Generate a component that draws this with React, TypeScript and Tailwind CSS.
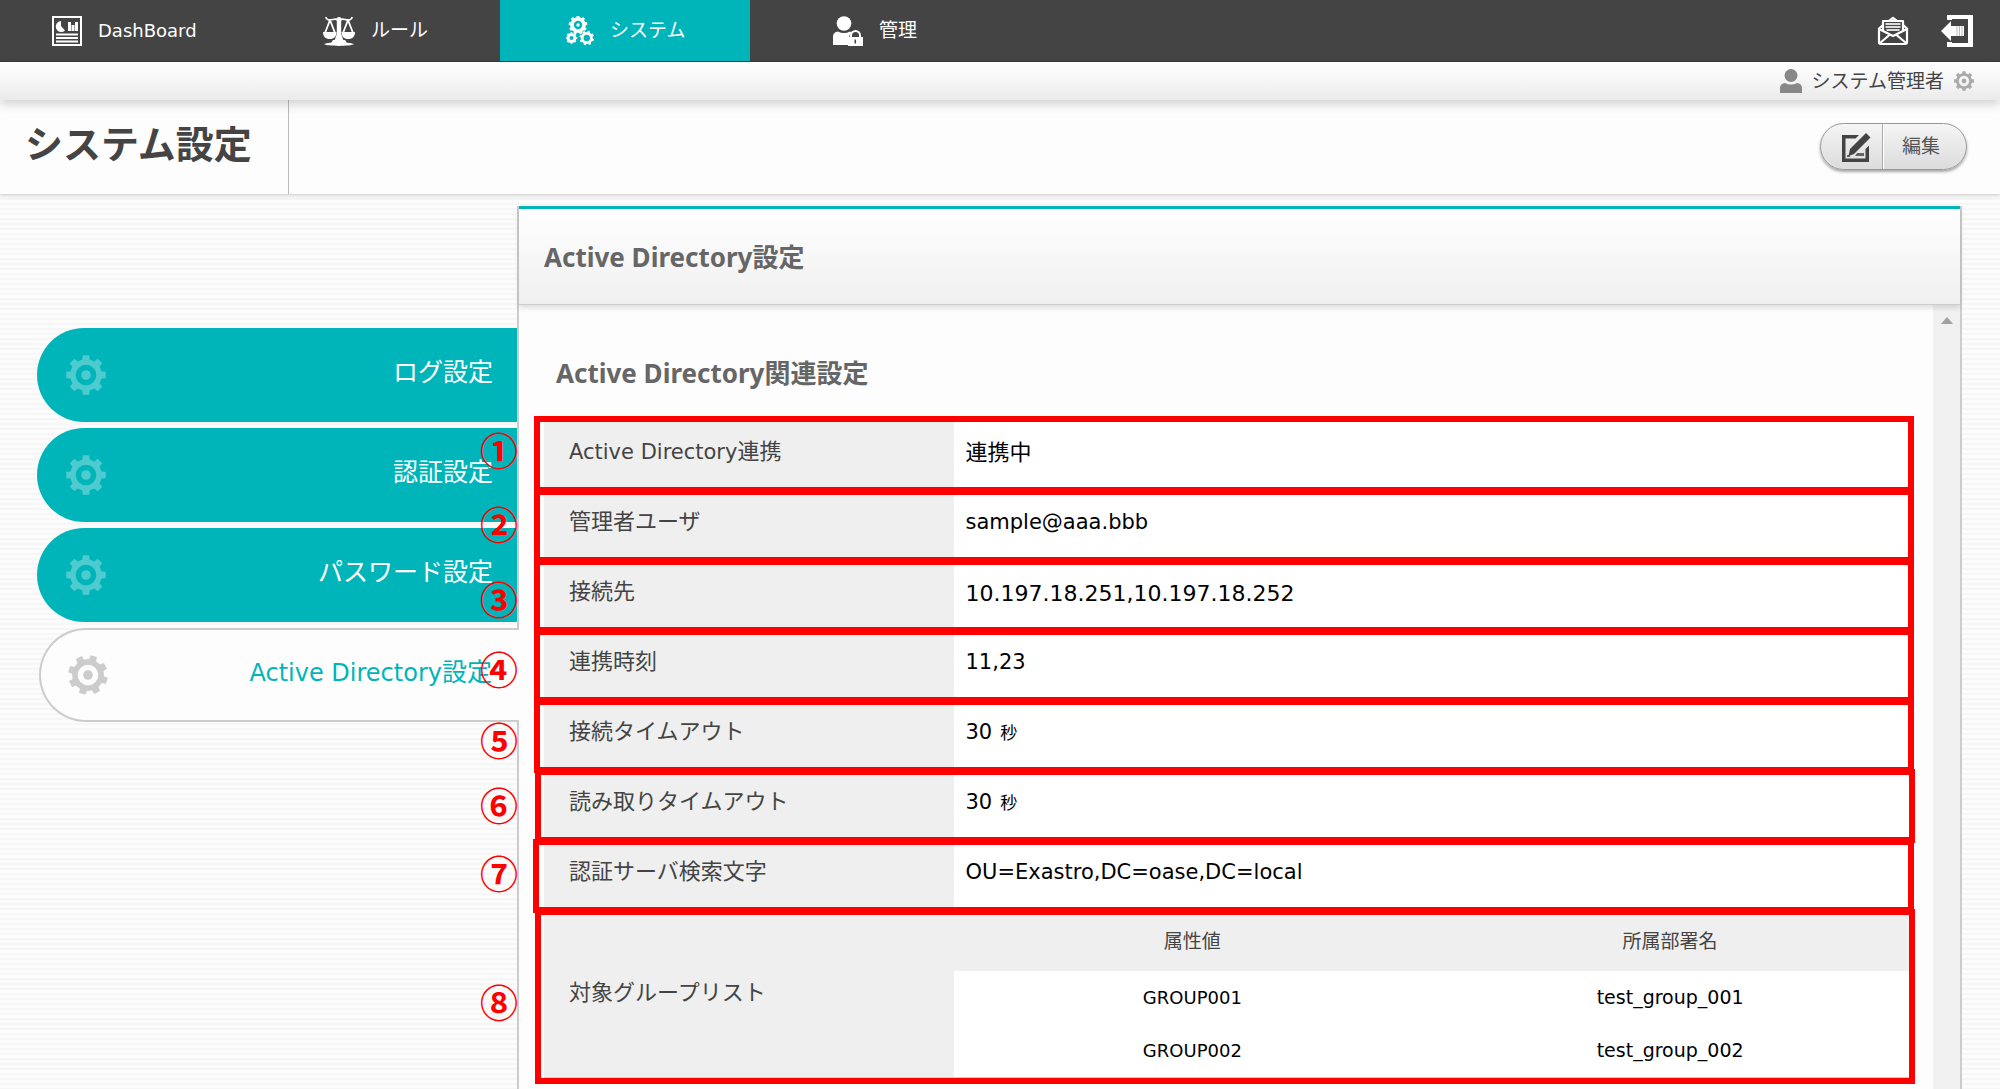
import React from 'react';

const gearPath = (cx: number, cy: number, ro: number, ri: number, teeth: number, rot = 0) => {
  const pts: string[] = [];
  const step = (Math.PI * 2) / teeth;
  for (let i = 0; i < teeth; i++) {
    const a = i * step + rot - Math.PI / 2;
    const add = (r: number, o: number) =>
      pts.push(`${(cx + r * Math.cos(a + o)).toFixed(2)} ${(cy + r * Math.sin(a + o)).toFixed(2)}`);
    add(ri, -step * 0.29);
    add(ro, -step * 0.21);
    add(ro, step * 0.21);
    add(ri, step * 0.29);
  }
  return `M${pts.join('L')}Z`;
};

const ring = (cx: number, cy: number, r: number) =>
  `M${cx - r} ${cy}a${r} ${r} 0 1 0 ${2 * r} 0a${r} ${r} 0 1 0 ${-2 * r} 0Z`;

function Gear({ className, rot = 0 }: { className: string; rot?: number }) {
  return (
    <svg viewBox="0 0 40 40" className={className} fill="currentColor" aria-hidden="true">
      <path fillRule="evenodd" d={gearPath(20, 20, 20, 16, 8, rot) + ring(20, 20, 10.3)} />
      <circle cx="20" cy="20" r="4.8" />
    </svg>
  );
}

function ReportIcon() {
  return (
    <svg viewBox="0 0 30 30" className="size-[30px]" aria-hidden="true">
      <path fill="#fff" fillRule="evenodd" d="M0 0h30v30H0ZM2 2v26h26V2Z" />
      <path fill="#fff" d="M9 5a5.500 5.500 0 1 0 4 9.500L9 10ZM16 6h3v9h-3ZM19.500 9h3v6h-3ZM23 6h3v9h-3ZM4 17.500h22v2H4ZM4 21h22v2H4ZM4 24.500h22v2H4Z" />
    </svg>
  );
}

function ScalesIcon() {
  return (
    <svg viewBox="0 0 32 30" className="h-[30px] w-8" fill="#fff" aria-hidden="true">
      <path d="M13.800 4h4.400v14l2.500 7h-9.400l2.500-7Z" />
      <circle cx="16" cy="3.500" r="2.500" />
      <path d="M3 1c0 3 3 3.500 7 2.500 3-.8 3 0 6 0s3-.8 6 0c4 1 7 .5 7-2.500M7 4 2 17M7 4l5 13M25 4l-5 13M25 4l5 13" fill="none" stroke="#fff" strokeWidth="1.800" />
      <path d="M0 16h13.500c0 4.500-2.500 7-6.700 7S0 20.500 0 16ZM18.500 16H32c0 4.500-2.500 7-6.700 7s-6.800-2.500-6.800-7Z" />
      <path d="M10 24h12l2 3H8ZM1 28c5-2.500 25-2.500 30 0-3 2.500-27 2.500-30 0Z" />
    </svg>
  );
}

function GearsIcon() {
  return (
    <svg viewBox="0 0 28 30" className="h-[30px] w-7" fill="#fff" fillRule="evenodd" aria-hidden="true">
      <path d={gearPath(12, 9, 9.4, 7.8, 9) + ring(12, 9, 4.2)} />
      <circle cx="12" cy="9" r="1.700" />
      <path d={gearPath(5.500, 22, 5.800, 4.900, 8) + ring(5.500, 22, 2)} />
      <path d={gearPath(20.800, 22, 7.400, 6, 8, 0.300) + ring(20.800, 22, 3.200)} />
    </svg>
  );
}

function AdminIcon() {
  return (
    <svg viewBox="0 0 30 30" className="size-[30px]" fill="#fff" aria-hidden="true">
      <circle cx="11" cy="7.500" r="7.300" />
      <path d="M0 29V21c0-3.500 2-5 5-5.500 4 2 8 2 12 0l2 1c-2 2-3 3-3 5.500l-1 1v6Z" />
      <path fillRule="evenodd" d="M15 21h15v9.500H15ZM21.500 23.500v4h1.500v-4Z" />
      <path d="M18 22v-2.500a4.500 4.500 0 0 1 9 0V22" fill="none" stroke="#fff" strokeWidth="2" />
    </svg>
  );
}

function MailIcon() {
  return (
    <svg viewBox="0 0 32 30" className="h-[30px] w-8" fill="none" stroke="#fff" strokeWidth="2.200" strokeLinejoin="round" aria-hidden="true">
      <path d="M6 9 2 12.500v14A1.500 1.500 0 0 0 3.500 28h25a1.500 1.500 0 0 0 1.500-1.500v-14L26 9" />
      <path d="M6 15V5h20v10M12 5l4-3 4 3" />
      <path d="m2 13 14 7 14-7M3 27l10-8.500M29 27l-10-8.500" />
      <path d="M8.500 8h15M8.500 11h15M9.500 14h13" stroke="#ddd" strokeWidth="2.200" />
    </svg>
  );
}

function LogoutIcon() {
  return (
    <svg viewBox="0 0 32 32" className="size-8" fill="#fff" aria-hidden="true">
      <path d="M6 0h26v32H6v-5h5v1h16V4H11v1H6Z" />
      <path d="M0 16 10 6v5h13v10H10v5Z" />
      <path d="M15.500 11h1v10h-1ZM18 11h1v10h-1ZM20.500 11h1v10h-1Z" fill="#bbb" />
    </svg>
  );
}

function EditIcon() {
  return (
    <svg viewBox="0 0 30 30" className="size-[30px]" fill="#444" aria-hidden="true">
      <path d="M1 3h17l-3.500 3.500H4.500v20h20V17l3.500-3.500V30H1Z" />
      <path d="m25 1 4.500 4.500L13 22l-5.500 2L9 17Z" />
      <path d="M6 23h3v2H6ZM16 21h7v3h-9Z" opacity=".8" />
    </svg>
  );
}

const nav = [
  { label: 'DashBoard', Icon: ReportIcon, style: 'pl-[52px] text-[18px]' },
  { label: 'ルール', Icon: ScalesIcon, style: 'pl-[73px] text-[19px]' },
  { label: 'システム', Icon: GearsIcon, style: 'pl-[66px] text-[19px] bg-[#00b5b9]' },
  { label: '管理', Icon: AdminIcon, style: 'pl-[83px] text-[19px]' },
];

const menu = [
  { latin: '', label: 'ログ設定' },
  { latin: '', label: '認証設定' },
  { latin: '', label: 'パスワード設定' },
  { latin: 'Active Directory', label: '設定', active: true },
];

const rows = [
  { mark: '①', top: 'top-px', latin: 'Active Directory', label: '連携', value: '連携中', size: 'text-[22px]', box: '-top-1 -left-2.5 -right-[5px]' },
  { mark: '②', top: 'top-[5px]', label: '管理者ユーザ', value: 'sample@aaa.bbb', size: 'text-[21px]', box: '-top-px -left-2.5 -right-[5px]' },
  { mark: '③', top: 'top-[10px]', label: '接続先', value: '10.197.18.251,10.197.18.252', size: 'text-[22px]', box: '-top-px -left-2.5 -right-[5px]' },
  { mark: '④', top: 'top-[10px]', label: '連携時刻', value: '11,23', size: 'text-[21px]', box: '-top-px -left-2.5 -right-[5px]' },
  { mark: '⑤', top: 'top-[11px]', label: '接続タイムアウト', value: '30', unit: '秒', size: 'text-[21px]', box: '-top-px -left-2.5 -right-[5px]' },
  { mark: '⑥', top: 'top-[6px]', label: '読み取りタイムアウト', value: '30', unit: '秒', size: 'text-[21px]', box: '-top-px -left-[9px] -right-1.5' },
  { mark: '⑦', top: 'top-[4px]', label: '認証サーバ検索文字', value: 'OU=Exastro,DC=oase,DC=local', size: 'text-[21px]', box: '-top-px -left-[11px] -right-[5px]' },
];

const groups = [
  ['GROUP001', 'test_group_001'],
  ['GROUP002', 'test_group_002'],
];

function Mark({ children, top }: { children: string; top: string }) {
  return (
    <span className={`absolute -left-[65px] z-20 ${top} w-10 text-center font-['Noto_Sans_CJK_JP',sans-serif] text-[38px] leading-[56px] font-bold text-[#f00]`}>
      {children}
    </span>
  );
}

export default function App() {
  return (
    <div className="flex h-screen flex-col overflow-hidden bg-[repeating-linear-gradient(to_bottom,#fcfcfc_0px,#fcfcfc_3px,#f6f6f6_3px,#f6f6f6_5px)] font-['DejaVu_Sans','Noto_Sans_CJK_JP',sans-serif] text-[#444]">
      <header className="relative z-20 shrink-0">
        <nav className="flex h-[62px] items-stretch border-b border-[#3c3c3c] bg-[#444] text-white">
          {nav.map(({ label, Icon, style }) => (
            <a key={label} href="#" className={`flex w-1/8 items-center gap-4 ${style}`}>
              <Icon />
              <span>{label}</span>
            </a>
          ))}
          <div className="ml-auto flex items-center gap-8 pr-[27px]">
            <button type="button" aria-label="メール"><MailIcon /></button>
            <button type="button" aria-label="ログアウト"><LogoutIcon /></button>
          </div>
        </nav>
        <div className="flex h-[38px] items-center justify-end gap-2.5 bg-linear-to-b from-white to-[#ebebeb] pr-[26px] shadow-[0_4px_10px_rgba(0,0,0,0.18)]">
          <svg viewBox="0 0 22 24" className="h-6 w-[22px] fill-[#888]" aria-hidden="true">
            <circle cx="11" cy="6.500" r="6.500" />
            <path d="M0 24v-5c0-3 2-4.500 5-5 4 2 8 2 12 0 3 .5 5 2 5 5v5Z" />
          </svg>
          <span className="text-[19px] leading-7">システム管理者</span>
          <button type="button" aria-label="ユーザ設定"><Gear className="size-5 text-[#aaa]" /></button>
        </div>
      </header>

      <div className="relative z-10 flex h-[94px] shrink-0 items-stretch justify-between bg-[#fdfdfd] shadow-[0_2px_4px_rgba(0,0,0,0.15)]">
        <h1 className="w-[289px] border-r border-[#bbb] pt-[18px] pl-[25px] text-[38px] leading-[54px] font-bold whitespace-nowrap">システム設定</h1>
        <button type="button" className="mt-[23px] mr-[33px] flex h-[47px] w-[147px] items-stretch rounded-full border border-[#999] bg-linear-to-b from-[#f5f5f5] to-[#dcdcdc] shadow-[0_2px_3px_rgba(0,0,0,0.35)]">
          <span className="flex w-[62px] items-center justify-center border-r border-[#aaa] pl-2"><EditIcon /></span>
          <span className="flex flex-1 items-center border-l border-white pl-[18px] text-[19px] text-[#555]">編集</span>
        </button>
      </div>

      <div className="flex min-h-0 flex-1 pt-3 pr-[38px]">
        <nav className="relative z-10 -mr-0.5 flex w-[519px] shrink-0 flex-col gap-1.5 pt-[122px] pl-[37px]">
          {menu.map(({ latin, label, active }) => (
            <a
              key={label + latin}
              href="#"
              className={`flex h-[94px] items-center justify-between rounded-l-full ${
                active
                  ? 'ml-0.5 border-y-2 border-l-2 border-[#ccc] bg-[#fdfdfd] pr-[27px] pl-[27px] text-[#00b5b9]'
                  : 'mr-0.5 bg-[#00b5b9] pr-6 pl-[29px] text-white'
              }`}
            >
              <Gear className={active ? 'size-10 text-[#ccc]' : 'size-10 text-[#4dcbce]'} rot={active ? 0.3 : 0} />
              <span className="pb-1 text-[25px]">
                <span className="text-[24px]">{latin}</span>
                {label}
              </span>
            </a>
          ))}
        </nav>

        <main className="flex min-w-0 flex-1 flex-col border-x-2 border-[#ccc] bg-[#fdfdfd]">
          <div className="relative z-10 h-[99px] shrink-0 border-t-[3px] border-b border-t-[#00b5b9] border-b-[#ccc] bg-linear-to-b from-white to-[#f0f0f0] pt-7 pl-[25px] shadow-[0_3px_5px_rgba(0,0,0,0.12)]">
            <h2 className="font-['Noto_Sans','Noto_Sans_CJK_JP',sans-serif] text-[26px] leading-10 font-bold text-[#666]">Active Directory設定</h2>
          </div>
          <div className="flex min-h-0 flex-1">
            <section className="min-w-0 flex-1 pr-6 pl-[25px]">
              <h3 className="pt-12 pb-[27px] pl-3 font-['Noto_Sans','Noto_Sans_CJK_JP',sans-serif] text-[26px] leading-10 font-bold text-[#666]">Active Directory関連設定</h3>
              <table className="w-full table-fixed border-collapse text-left">
                <colgroup>
                  <col className="w-[30%]" />
                  <col className="w-[35%]" />
                  <col className="w-[35%]" />
                </colgroup>
                <tbody>
                  {rows.map((row) => (
                    <tr key={row.mark} className="relative h-[70px] border-b-2 border-[#ccc] bg-white">
                      <th scope="row" className="bg-[#efefef] pb-1.5 pl-[25px] text-[22px] font-normal">
                        <span className="text-[21px]">{row.latin}</span>
                        {row.label}
                        <Mark top={row.top}>{row.mark}</Mark>
                        <span className={`pointer-events-none absolute -bottom-[5px] border-[6px] border-[#f00] ${row.box}`} />
                      </th>
                      <td colSpan={2} className={`pb-1 pl-3 text-black ${row.size}`}>
                        {row.value}
                        {row.unit && <span className="ml-2 text-[17px]">{row.unit}</span>}
                      </td>
                    </tr>
                  ))}
                  <tr className="relative border-b-2 border-[#ccc] bg-white">
                    <th scope="row" className="bg-[#efefef] pb-1 pl-[25px] text-[22px] font-normal">
                      対象グループリスト
                      <Mark top="top-[63px]">⑧</Mark>
                      <span className="pointer-events-none absolute -top-px -right-1.5 -bottom-2 -left-[9px] border-[6px] border-[#f00]" />
                    </th>
                    <td colSpan={2} className="p-0">
                      <table className="w-full table-fixed text-center">
                        <thead>
                          <tr className="h-[60px] bg-[#efefef] text-[19px]">
                            <th scope="col" className="font-normal">属性値</th>
                            <th scope="col" className="font-normal">所属部署名</th>
                          </tr>
                        </thead>
                        <tbody className="text-black">
                          {groups.map(([attr, dept]) => (
                            <tr key={attr} className="h-[53px]">
                              <td className="text-[18px]">{attr}</td>
                              <td className="text-[19px]">{dept}</td>
                            </tr>
                          ))}
                        </tbody>
                      </table>
                    </td>
                  </tr>
                </tbody>
              </table>
            </section>
            <div className="flex w-[27px] shrink-0 justify-center bg-[#f0f0f0] pt-3">
              <svg viewBox="0 0 12 7" className="h-[7px] w-3 fill-[#a0a0a0]" aria-hidden="true">
                <path d="M0 7 6 0l6 7Z" />
              </svg>
            </div>
          </div>
        </main>
      </div>
    </div>
  );
}
